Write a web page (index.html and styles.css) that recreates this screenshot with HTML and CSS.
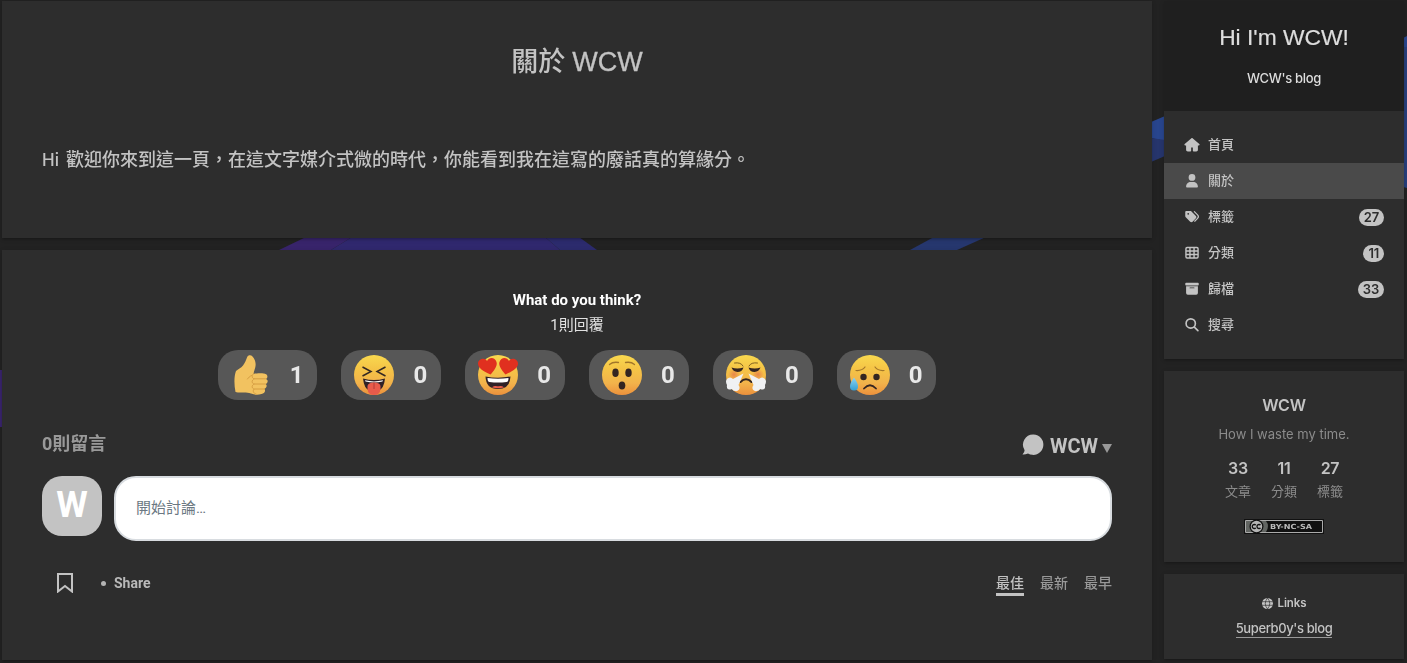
FILE: index.html
```html
<!DOCTYPE html>
<html lang="zh-TW">
<head>
<meta charset="utf-8">
<title>關於 WCW</title>
<link rel="stylesheet" href="styles.css">
</head>
<body>
<svg class="ribbons" viewBox="0 0 1407 663" aria-hidden="true">
  <path fill="#38246b" d="M279 250 306 237H352L331 250zM0 370H4V427H0z"/>
  <path fill="#30286e" d="M331 250 352 237H545L560 250z"/>
  <path fill="#2c2b6d" d="M545 237H579L597 250H560z"/>
  <path fill="#26376e" d="M910 250 934 237H986L957 250z"/>
  <path fill="#28458d" d="M1151 122 1165 116V141L1151 138zM1403 38 1407 36V47H1403z"/>
  <path fill="#26356c" d="M1151 138 1165 140V156L1151 162z"/>
  <path fill="#273f7c" d="M1403 47H1407V188L1403 187z"/>
</svg>
<div class="page">
  <main class="main">
    <article class="card post">
      <h1 class="post-title">關於 <span class="post-title-latin">WCW</span></h1>
      <p class="post-text"><span class="post-hi">Hi </span>歡迎你來到這一頁，在這文字媒介式微的時代，你能看到我在這寫的廢話真的算緣分。</p>
    </article>
    <section class="card comments">
      <div class="question">What do you think?</div>
      <div class="responses">1則回覆</div>
      <div class="reactions">
        <button class="reaction">
          <svg class="emoji" viewBox="0 0 40 40">
            <defs>
              <linearGradient id="face" x1="0" y1="0" x2="0" y2="1"><stop offset="0" stop-color="#f9d94f"/><stop offset=".35" stop-color="#f5c446"/><stop offset=".7" stop-color="#f2b34b"/><stop offset="1" stop-color="#ec913c"/></linearGradient>
              <linearGradient id="tear" x1="0" y1="0" x2="0" y2="1"><stop offset="0" stop-color="#8bd3f3"/><stop offset="1" stop-color="#359fd3"/></linearGradient>
              <radialGradient id="blush"><stop offset="0" stop-color="#e3744b" stop-opacity=".75"/><stop offset="1" stop-color="#e3744b" stop-opacity="0"/></radialGradient>
            </defs>
            <path fill="#f2c260" d="M5 16C7 14 10 13 12 10.500C14 8 15 5 16.200 2C17 0 20 -.300 21.500 1.500C24 4 25 8 24.500 11C24.200 14 22.800 16 22.500 19C25 18 31 18 33 18.500C37 19 37.200 22.500 35 24C37.500 25 37 28 34.800 29C36.500 30.500 35.500 33 33.500 33.700C35 36 33.500 38.500 30.500 39C27 40 24 40 20 38.500C14 36.500 9 38.500 4.500 37C3 30 3 21 5 16z"/>
            <path fill="none" stroke="#d39a40" stroke-width=".9" stroke-linecap="round" d="M23 18.500C20.500 19.500 20.500 23 23 23.800H34.500M23 24C20.500 25 20.500 28.300 23 29H34.500M23 29.200C20.500 30 20.500 33.300 23 34H33.500M23 34.200C21.500 35.500 22 38.300 25 39M20.500 20.500C18.500 21.500 17.500 22.500 16.500 24"/>
          </svg><span class="count">1</span>
        </button>
        <button class="reaction">
          <svg class="emoji" viewBox="0 0 40 40">
            <circle cx="20" cy="20" r="20" fill="url(#face)"/>
            <path fill="none" stroke="#342823" stroke-width="1.500" d="M8.500 12 17 16.500 8.500 21M31.500 12 23 16.500 31.500 21"/>
            <path fill="#302127" d="M9 23.500Q20 26.500 31 23.500Q30 34 24 36H16Q10 34 9 23.500z"/>
            <path fill="#fff" d="M11 25.300Q20 27.500 29 25.300L28.500 26.500Q20 28.500 11.500 26.500z"/>
            <path fill="#e85b4b" d="M13.500 31Q14 27.500 20 27.500Q26 27.500 26.500 31V34Q26 40 20 40Q14 40 13.500 34z"/>
            <path stroke="#b9413d" stroke-width="1.200" d="M20 27.500V34"/>
          </svg><span class="count">0</span>
        </button>
        <button class="reaction">
          <svg class="emoji" viewBox="0 0 40 40">
            <circle cx="20" cy="20" r="20" fill="url(#face)"/>
            <path fill="#e0301f" d="M12.500 19.500C5 16 0 13 0 8.500C0 4 7 2 9 6C11 2 17 2 18.500 7C20 11 15 17 12.500 19.500z"/>
            <path fill="#e0301f" d="M27.500 19.500C35 16 40 13 40 8.500C40 4 33 2 31 6C29 2 23 2 21.500 7C20 11 25 17 27.500 19.500z"/>
            <path fill="#302127" d="M7.500 21.500Q20 24 32.500 21.500Q32 34 20 34Q8 34 7.500 21.500z"/>
            <path fill="#fff" d="M9.500 23Q20 24.500 30.500 23Q30.500 27 28.500 27Q20 28 11.500 27Q9.500 27 9.500 23z"/>
            <path fill="#e85b4b" d="M14 32.500Q15 30.500 18 31Q20 31.500 22 31Q25 30.500 26 32.500Q20 34 14 32.500z"/>
          </svg><span class="count">0</span>
        </button>
        <button class="reaction">
          <svg class="emoji" viewBox="0 0 40 40">
            <circle cx="20" cy="20" r="20" fill="url(#face)"/>
            <path fill="none" stroke="#a2762a" stroke-width="1.300" stroke-linecap="round" d="M7.500 9.500Q11 6.500 16.500 7.500M23.500 7.500Q29 6.500 32.500 9.500"/>
            <g fill="#342521"><ellipse cx="13.500" cy="17.800" rx="3.200" ry="4.300"/><ellipse cx="26.500" cy="17.800" rx="3.200" ry="4.300"/><ellipse cx="20" cy="30.500" rx="3.300" ry="3.900"/></g>
          </svg><span class="count">0</span>
        </button>
        <button class="reaction">
          <svg class="emoji" viewBox="0 0 40 40">
            <circle cx="20" cy="20" r="20" fill="url(#face)"/>
            <circle cx="8" cy="19.500" r="6" fill="url(#blush)"/><circle cx="32" cy="19.500" r="6" fill="url(#blush)"/>
            <path fill="none" stroke="#80601f" stroke-width="1" stroke-linecap="round" d="M8.500 8Q15 7 17 11M31.500 8Q25 7 23 11"/>
            <path fill="#342521" d="M5.500 12.500Q11 14.500 17.500 12.500Q16 17 11.500 17Q7 16.500 5.500 12.500zM34.500 12.500Q29 14.500 22.500 12.500Q24 17 28.500 17Q33 16.500 34.500 12.500z"/>
            <path fill="none" stroke="#342521" stroke-width="2" stroke-linecap="round" d="M14.500 27Q20 21.500 25.500 27"/>
            <path fill="#f0f1f3" d="M17.500 18.500 12.500 30C15 33 13 37 9 36Q7 36 6 34Q0 36 1 30Q-1 26 1 24Q4 21 7 24zM22.500 18.500 27.500 30C25 33 27 37 31 36Q33 36 34 34Q40 36 39 30Q41 26 39 24Q36 21 33 24z"/>
          </svg><span class="count">0</span>
        </button>
        <button class="reaction">
          <svg class="emoji" viewBox="0 0 40 40">
            <circle cx="20" cy="20" r="20" fill="url(#face)"/>
            <path fill="none" stroke="#a2762a" stroke-width="1.200" stroke-linecap="round" d="M6 15.500Q12 16 15 12M25 12Q28 16 34 15.500"/>
            <circle cx="13.500" cy="22" r="3.200" fill="#342521"/><circle cx="26.500" cy="22" r="3.200" fill="#342521"/>
            <path fill="none" stroke="#342521" stroke-width="1.800" stroke-linecap="round" d="M14 33.500Q20 27 26 33.500"/>
            <path fill="url(#tear)" d="M4 22.500Q8 28 8 31.500Q8 35.500 4 35.500Q0 35.500 0 31.500Q0 28 4 22.500z"/>
          </svg><span class="count">0</span>
        </button>
      </div>
      <div class="thread-head">
        <span class="thread-count">0則留言</span>
        <span class="account">
          <svg class="bubble" viewBox="0 0 22 22"><path fill="#c3c3c3" d="M11.300.500A10.200 10.200 0 1 1 6 19.500Q3 20.800.500 20.500Q2.500 18.500 2.600 16.200A10.200 10.200 0 0 1 11.300.500z"/></svg>
          <span class="account-name">WCW</span>
          <svg class="caret" viewBox="0 0 10 9"><path fill="#999" d="M0 0H10L5 9z"/></svg>
        </span>
      </div>
      <div class="compose">
        <div class="avatar">W</div>
        <div class="textbox">開始討論…</div>
      </div>
      <div class="thread-nav">
        <svg class="bookmark" viewBox="0 0 16 20"><path fill="none" stroke="#c3c3c3" stroke-width="2" d="M1 1H15V18.500L8 13 1 18.500z"/></svg>
        <span class="dot"></span>
        <span class="share">Share</span>
        <span class="sort active">最佳</span>
        <span class="sort">最新</span>
        <span class="sort">最早</span>
      </div>
    </section>
  </main>
  <aside class="sidebar">
    <div class="card site">
      <header class="brand">
        <div class="site-title">Hi I'm WCW!</div>
        <div class="site-subtitle">WCW's blog</div>
      </header>
      <nav class="menu">
        <a class="menu-item"><svg class="menu-icon" viewBox="0 0 576 512"><path d="M575.800 255.500c0 18-15 32.100-32 32.100h-32l.7 160.200c0 35-28 64.200-64 64.200H352c-18 0-32-14-32-32v-96c0-18-14-32-32-32s-32 14-32 32v96c0 18-14 32-32 32h-96c-35 0-64-29-64-64V287.600H32c-18 0-32-14-32-32.100 0-9 3-17 10-24L266.400 8c7-7 15-8 22-8s15 2 21 7l255.400 224.500c8 7 12 15 11 24z"/></svg><span class="menu-label">首頁</span></a>
        <a class="menu-item current"><svg class="menu-icon" viewBox="0 0 448 512"><path d="M224 256a128 128 0 1 0 0-256 128 128 0 1 0 0 256zM178 304C80 304 0 383 0 482c0 16 13 30 30 30h388c17 0 30-14 30-30 0-99-80-178-178-178z"/></svg><span class="menu-label">關於</span></a>
        <a class="menu-item"><svg class="menu-icon" viewBox="0 0 512 512"><path fill-rule="evenodd" d="M0 80v150c0 17 7 33 19 45l168 168c25 25 66 25 91 0l126-126c25-25 25-66 0-91L237 58c-12-12-29-18-45-18H48C22 40 0 54 0 80zm112 32a32 32 0 1 1 0 64 32 32 0 0 1 0-64z"/><path fill="none" stroke="#c3c3c3" stroke-width="45" stroke-linecap="round" d="m345 61 122 124c36 37 36 95 0 132L359 426"/></svg><span class="menu-label">標籤</span><span class="badge">27</span></a>
        <a class="menu-item"><svg class="menu-icon" viewBox="0 0 512 512"><path fill="none" stroke="#c3c3c3" stroke-width="54" d="M70 58h372q44 0 44 44v308q0 44-44 44H70q-44 0-44-44V102q0-44 44-44zM26 190h460M26 322h460M178 58v396M334 58v396"/></svg><span class="menu-label">分類</span><span class="badge">11</span></a>
        <a class="menu-item"><svg class="menu-icon" viewBox="0 0 512 512"><path fill-rule="evenodd" d="M32 32h448q32 0 32 32v32q0 32-32 32H32Q0 128 0 96V64q0-32 32-32zM32 160h448v256q0 64-64 64H96q-64 0-64-64zm144 48q-16 0-16 16t16 16h160q16 0 16-16t-16-16z"/></svg><span class="menu-label">歸檔</span><span class="badge">33</span></a>
        <a class="menu-item"><svg class="menu-icon" viewBox="0 0 512 512"><path fill="none" stroke="#c3c3c3" stroke-width="62" stroke-linecap="round" d="M208 32a176 176 0 1 0 0 352 176 176 0 0 0 0-352M335 335 480 480"/></svg><span class="menu-label">搜尋</span></a>
      </nav>
    </div>
    <div class="card author">
      <div class="author-name">WCW</div>
      <div class="author-bio">How I waste my time.</div>
      <div class="stats">
        <div class="stat"><b class="stat-number">33</b>文章</div>
        <div class="stat"><b class="stat-number">11</b>分類</div>
        <div class="stat"><b class="stat-number">27</b>標籤</div>
      </div>
      <svg class="license" viewBox="0 0 80 15">
        <path fill="#111" d="M0 0H80V15H0z"/><path fill="none" stroke="#aaa" d="M1.500 1.500H78.500V13.500H1.500z"/>
        <path fill="#626562" d="M2 2H22Q26 7 22 13H2z"/>
        <circle cx="12.500" cy="7.500" r="7" fill="#111"/><circle cx="12.500" cy="7.500" r="5.700" fill="#b5b5b5"/>
        <path fill="none" stroke="#111" stroke-width="1.300" d="M11.800 6.200A2 2 0 1 0 11.800 8.800M16.500 6.200A2 2 0 1 0 16.500 8.800"/>
        <text class="license-text" x="26" y="10.300" textLength="42" lengthAdjust="spacingAndGlyphs">BY-NC-SA</text>
      </svg>
    </div>
    <div class="card links">
      <div class="links-title"><svg class="globe" viewBox="0 0 16 16"><circle cx="8" cy="8" r="8" fill="#c3c3c3"/><path fill="none" stroke="#2d2d2d" stroke-width="1" d="M0 5.400H16M0 10.600H16M8 0Q1.500 8 8 16M8 0Q14.500 8 8 16"/></svg>Links</div>
      <a class="link">5uperb0y's blog</a>
    </div>
  </aside>
</div>
</body>
</html>
```
FILE: styles.css
```css
* { box-sizing: border-box; }
body {
  margin: 0;
  height: 663px;
  overflow: hidden;
  background: #222;
  color: #c3c3c3;
  font-family: Inter, "Noto Sans CJK TC", sans-serif;
}
.ribbons { position: fixed; inset: 0; width: 1407px; height: 663px; z-index: -1; }
.page { display: flex; gap: 12px; width: 1404px; padding: 1px 0 0 2px; }
.main { flex: 1; display: flex; flex-direction: column; gap: 12px; }
.sidebar { width: 240px; display: flex; flex-direction: column; gap: 12px; }
.card {
  background: #2d2d2d;
  box-shadow: 0 2px 2px rgba(0,0,0,.12), 0 3px 1px -2px rgba(0,0,0,.06), 0 1px 5px rgba(0,0,0,.12);
}

.post { height: 237px; padding: 41px 40px 40px; }
.post-title { margin: 0; font-size: 27px; line-height: 40px; font-weight: 500; text-align: center; }
.post-title-latin { font-family: "Liberation Sans", sans-serif; font-weight: 400; -webkit-text-stroke: .3px; }
.post-text { margin: 60px 0 0; font-size: 18px; line-height: 36px; font-weight: 500; white-space: nowrap; }
.post-hi { display: inline-block; width: 24px; white-space: pre; font-size: 17px; }

.comments {
  height: 410px;
  padding: 40px 40px 0;
  font-family: Roboto, "Noto Sans CJK TC", sans-serif;
}
.question { color: #fff; font-size: 15px; line-height: 20px; font-weight: 700; text-align: center; }
.responses { margin-top: 5px; color: #e2e2e2; font-size: 15px; line-height: 20px; text-align: center; }
.reactions { display: flex; justify-content: center; gap: 24px; margin-top: 15px; }
.reaction {
  display: flex;
  align-items: center;
  width: 99.800px;
  height: 50px;
  padding: 0 0 0 13px;
  border: 0;
  border-radius: 20px;
  background: #575757;
}
.emoji { flex: none; width: 40px; height: 40px; }
.count { flex: none; width: 52px; color: #e8e8e8; font: 700 24px/50px Roboto, sans-serif; text-align: center; }
.thread-head { display: flex; justify-content: space-between; align-items: center; height: 30px; margin-top: 30px; }
.thread-count { height: 30px; color: #999; font-size: 18px; line-height: 28px; font-weight: 700; }
.account { display: flex; align-items: center; }
.bubble { width: 22px; height: 22px; margin-right: 6px; }
.account-name { height: 30px; font-size: 20px; font-weight: 700; line-height: 32px; }
.caret { width: 10px; height: 9px; margin: 6px 0 0 4px; }
.compose { display: flex; gap: 12px; margin-top: 16px; }
.avatar {
  width: 60px;
  height: 60px;
  border-radius: 20px;
  background: #c3c3c3;
  color: #fff;
  font-size: 36px;
  line-height: 58px;
  font-weight: 700;
  text-align: center;
}
.textbox {
  flex: 1;
  height: 65px;
  padding: 0 20px;
  border: 2px solid #d8dce0;
  border-radius: 22px;
  background: #fff;
  color: #6b7882;
  font-size: 15px;
  line-height: 61px;
}
.thread-nav { display: flex; align-items: center; height: 28px; margin-top: 28px; padding-left: 15px; font-size: 14px; }
.bookmark { width: 16px; height: 20px; }
.dot { width: 5px; height: 5px; margin: 1px 8px 0 28px; border-radius: 50%; background: #b3b3b3; }
.share { margin-right: auto; color: #b9b9b9; font-weight: 700; }
.sort { height: 26px; margin-left: 16px; color: #999; line-height: 26px; font-weight: 500; border-bottom: 3px solid transparent; }
.sort.active { color: #c3c3c3; border-color: #c3c3c3; }

.brand { height: 110px; padding-top: 20px; background: #1f1f1f; color: #ddd; text-align: center; }
.site-title { font: 400 22.800px/32px "Liberation Sans", sans-serif; -webkit-text-stroke: .2px; }
.site-subtitle { margin-top: 15px; font-size: 13px; line-height: 20px; font-weight: 500; letter-spacing: -.3px; }
.menu { padding: 16px 0; }
.menu-item { display: flex; align-items: center; height: 36px; padding: 0 20px; font-size: 13px; font-weight: 500; }
.menu-item.current { background: #4a4a4a; }
.menu-label { height: 36px; line-height: 34px; }
.menu-icon { width: 16px; height: 13.500px; margin-right: 8px; fill: #c3c3c3; overflow: visible; }
.badge {
  height: 17px;
  margin-left: auto;
  padding: 0 5px;
  border-radius: 9px;
  background: #c3c3c3;
  color: #2d2d2d;
  font-size: 13px;
  line-height: 17px;
  font-weight: 600;
  letter-spacing: -.2px;
}

.author { height: 191px; padding-top: 22px; text-align: center; }
.author-name { font-size: 16px; line-height: 24px; font-weight: 600; letter-spacing: -.2px; }
.author-bio { margin-top: 7px; color: #8b8b8b; font-size: 13px; line-height: 20px; }
.stats { display: flex; justify-content: center; gap: 20px; margin-top: 12px; }
.stat { width: 26px; color: #8b8b8b; font-size: 13px; line-height: 22px; white-space: nowrap; }
.stat-number { display: block; color: #c3c3c3; font-size: 16px; line-height: 24px; font-weight: 600; letter-spacing: -.3px; }
.license { display: block; width: 80px; height: 15px; margin: 17px auto 0; }
.license-text { fill: #bbb; font: 700 7px "DejaVu Sans", sans-serif; }
.links { height: 85px; padding-top: 19px; text-align: center; }
.links-title { display: flex; align-items: center; justify-content: center; gap: 5px; height: 20px; font-size: 11.500px; font-weight: 600; letter-spacing: -.1px; }
.globe { width: 11px; height: 11px; }
.link { display: inline-block; margin-top: 6px; font-size: 13px; line-height: 18px; font-weight: 500; letter-spacing: -.38px; border-bottom: 1px solid #999; }
```
